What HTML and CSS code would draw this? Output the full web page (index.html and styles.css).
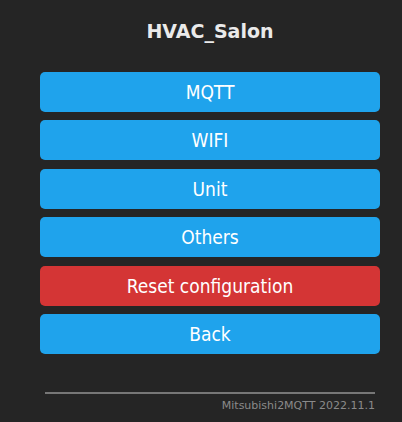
FILE: index.html
```html
<!DOCTYPE html>
<html>
<head>
<meta charset="utf-8">
<link rel="stylesheet" href="styles.css">
</head>
<body>
<div class="page">
  <h2 class="title">HVAC_Salon</h2>
  <div class="menu">
    <button class="btn">MQTT</button>
    <button class="btn">WIFI</button>
    <button class="btn">Unit</button>
    <button class="btn">Others</button>
    <button class="btn btn-red">Reset configuration</button>
    <button class="btn">Back</button>
  </div>
  <div class="footer">
    <hr class="rule">
    <div class="version">Mitsubishi2MQTT 2022.11.1</div>
  </div>
</div>
</body>
</html>
```
FILE: styles.css
```css
html, body {
  margin: 0;
  padding: 0;
  background: #252525;
}
body {
  font-family: "DejaVu Sans", Verdana, sans-serif;
  color: #eaeaea;
}
.page {
  width: 340px;
  margin-left: 40px;
  padding-top: 20px;
}
.title {
  margin: 0;
  text-align: center;
  font-size: 19px;
  font-weight: bold;
  line-height: 22px;
  color: #eaeaea;
}
.menu {
  display: flex;
  flex-direction: column;
  gap: 8.4px;
  margin-top: 30px;
}
.btn {
  display: block;
  width: 100%;
  height: 40px;
  border: 0;
  border-radius: 5px;
  background: #1fa3ec;
  color: #fff;
  font-family: "DejaVu Sans Condensed", "DejaVu Sans", Verdana, sans-serif;
  font-stretch: condensed;
  font-size: 19px;
  padding: 0;
}
.btn-red {
  background: #d43535;
}
.footer {
  margin-top: 38px;
  padding: 0 5px;
}
.rule {
  margin: 0;
  border: 0;
  height: 2px;
  background: #777;
}
.version {
  text-align: right;
  font-size: 11px;
  color: #8a8a8a;
  margin-top: 5px;
}
```
